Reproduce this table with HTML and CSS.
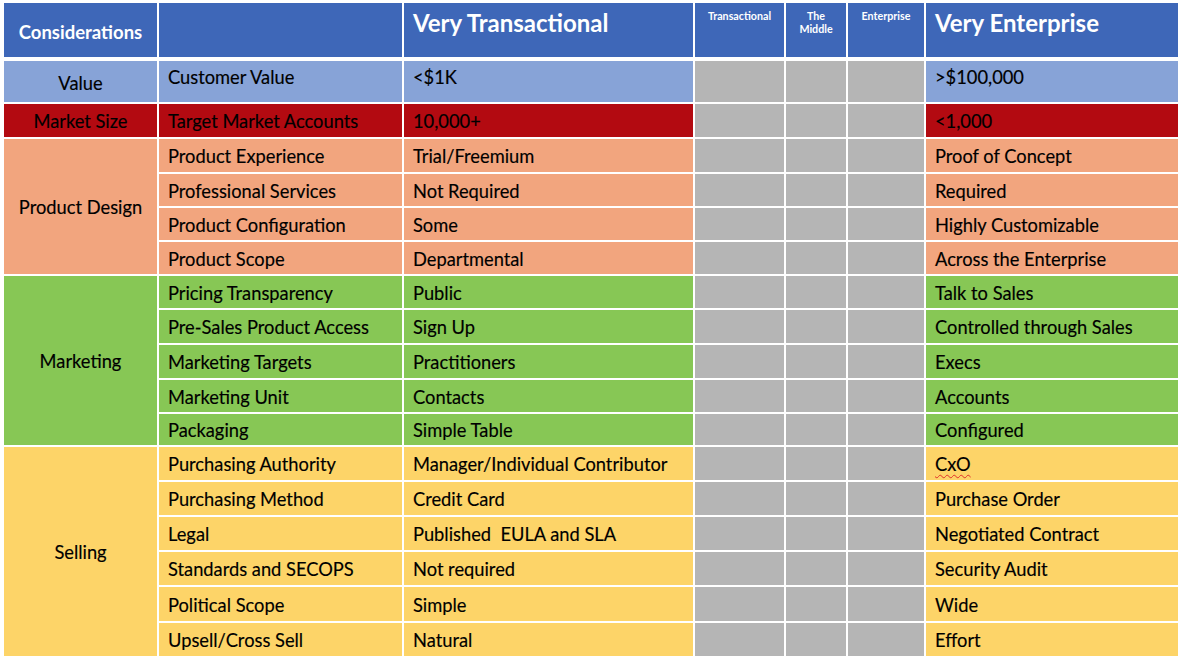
FILE: index.html
```html
<!DOCTYPE html>
<html lang="en">
<head>
<meta charset="utf-8">
<title>Transactional vs Enterprise</title>
<link rel="stylesheet" href="styles.css">
</head>
<body>
<div class="matrix">
  <div class="row head">
    <div class="cell cat">Considerations</div>
    <div class="cell"></div>
    <div class="cell big">Very Transactional</div>
    <div class="cell small">Transactional</div>
    <div class="cell small">The<br>Middle</div>
    <div class="cell small">Enterprise</div>
    <div class="cell big">Very Enterprise</div>
  </div>

  <div class="row value">
    <div class="cell cat">Value</div>
    <div class="cell">Customer Value</div>
    <div class="cell">&lt;$1K</div>
    <div class="cell gray"></div><div class="cell gray"></div><div class="cell gray"></div>
    <div class="cell">&gt;$100,000</div>
  </div>

  <div class="row market">
    <div class="cell cat">Market Size</div>
    <div class="cell">Target Market Accounts</div>
    <div class="cell">10,000+</div>
    <div class="cell gray"></div><div class="cell gray"></div><div class="cell gray"></div>
    <div class="cell">&lt;1,000</div>
  </div>

  <div class="row product">
    <div class="cell cat span4">Product Design</div>
    <div class="cell">Product Experience</div>
    <div class="cell">Trial/Freemium</div>
    <div class="cell gray"></div><div class="cell gray"></div><div class="cell gray"></div>
    <div class="cell">Proof of Concept</div>
  </div>
  <div class="row product">
    <div class="cell">Professional Services</div>
    <div class="cell">Not Required</div>
    <div class="cell gray"></div><div class="cell gray"></div><div class="cell gray"></div>
    <div class="cell">Required</div>
  </div>
  <div class="row product">
    <div class="cell">Product Configuration</div>
    <div class="cell">Some</div>
    <div class="cell gray"></div><div class="cell gray"></div><div class="cell gray"></div>
    <div class="cell">Highly Customizable</div>
  </div>
  <div class="row product">
    <div class="cell">Product Scope</div>
    <div class="cell">Departmental</div>
    <div class="cell gray"></div><div class="cell gray"></div><div class="cell gray"></div>
    <div class="cell">Across the Enterprise</div>
  </div>

  <div class="row marketing">
    <div class="cell cat span5">Marketing</div>
    <div class="cell">Pricing Transparency</div>
    <div class="cell">Public</div>
    <div class="cell gray"></div><div class="cell gray"></div><div class="cell gray"></div>
    <div class="cell">Talk to Sales</div>
  </div>
  <div class="row marketing">
    <div class="cell">Pre-Sales Product Access</div>
    <div class="cell">Sign Up</div>
    <div class="cell gray"></div><div class="cell gray"></div><div class="cell gray"></div>
    <div class="cell">Controlled through Sales</div>
  </div>
  <div class="row marketing">
    <div class="cell">Marketing Targets</div>
    <div class="cell">Practitioners</div>
    <div class="cell gray"></div><div class="cell gray"></div><div class="cell gray"></div>
    <div class="cell">Execs</div>
  </div>
  <div class="row marketing">
    <div class="cell">Marketing Unit</div>
    <div class="cell">Contacts</div>
    <div class="cell gray"></div><div class="cell gray"></div><div class="cell gray"></div>
    <div class="cell">Accounts</div>
  </div>
  <div class="row marketing">
    <div class="cell">Packaging</div>
    <div class="cell">Simple Table</div>
    <div class="cell gray"></div><div class="cell gray"></div><div class="cell gray"></div>
    <div class="cell">Configured</div>
  </div>

  <div class="row selling">
    <div class="cell cat span6">Selling</div>
    <div class="cell">Purchasing Authority</div>
    <div class="cell">Manager/Individual Contributor</div>
    <div class="cell gray"></div><div class="cell gray"></div><div class="cell gray"></div>
    <div class="cell"><span class="spell">CxO</span></div>
  </div>
  <div class="row selling">
    <div class="cell">Purchasing Method</div>
    <div class="cell">Credit Card</div>
    <div class="cell gray"></div><div class="cell gray"></div><div class="cell gray"></div>
    <div class="cell">Purchase Order</div>
  </div>
  <div class="row selling">
    <div class="cell">Legal</div>
    <div class="cell">Published&nbsp; EULA and SLA</div>
    <div class="cell gray"></div><div class="cell gray"></div><div class="cell gray"></div>
    <div class="cell">Negotiated Contract</div>
  </div>
  <div class="row selling">
    <div class="cell">Standards and SECOPS</div>
    <div class="cell">Not required</div>
    <div class="cell gray"></div><div class="cell gray"></div><div class="cell gray"></div>
    <div class="cell">Security Audit</div>
  </div>
  <div class="row selling">
    <div class="cell">Political Scope</div>
    <div class="cell">Simple</div>
    <div class="cell gray"></div><div class="cell gray"></div><div class="cell gray"></div>
    <div class="cell">Wide</div>
  </div>
  <div class="row selling">
    <div class="cell">Upsell/Cross Sell</div>
    <div class="cell">Natural</div>
    <div class="cell gray"></div><div class="cell gray"></div><div class="cell gray"></div>
    <div class="cell">Effort</div>
  </div>
</div>
</body>
</html>
```

FILE: styles.css
```css
* { box-sizing: border-box; }

html, body {
  margin: 0;
  padding: 0;
  background: #ffffff;
}

body {
  font-family: Lato, "Open Sans", sans-serif;
  color: #000000;
  width: 1185px;
  height: 663px;
  overflow: hidden;
}

.matrix {
  display: grid;
  margin: 3px 0 0 4px;
  width: 1174px;
  grid-template-columns: 153px 243px 289px 89px 60px 76px 252px;
  grid-template-rows: 56px 41px 33px 33px 32px 32px 32px 32px 33px 33px 32px 31px 33px 33px 33px 33px 34px 33px;
  gap: 2px;
}

.row { display: contents; }

.cell {
  display: flex;
  align-items: center;
  padding: 2px 9px 0;
  font-size: 18.3px;
  line-height: 21px;
  white-space: nowrap;
  -webkit-text-stroke: 0.15px #000;
}

.cell.cat { justify-content: center; padding: 2px 4px 0; }

.span4 { grid-row: span 4; }
.span5 { grid-row: span 5; }
.span6 { grid-row: span 6; }

/* header */
.head .cell {
  background: #3e67b8;
  color: #ffffff;
  font-weight: 700;
  margin-bottom: 2px;
  -webkit-text-stroke: 0;
}
.head .cat { font-size: 18.5px; padding-top: 4px; }
.head .big {
  align-items: flex-start;
  font-size: 24px;
  line-height: 28px;
  padding-top: 6px;
}
.head .small {
  flex-direction: column;
  align-items: center;
  justify-content: flex-start;
  text-align: center;
  font-size: 10.7px;
  line-height: 13px;
  padding: 6px 2px 0;
}

/* value */
.value .cell { background: #87a3d7; align-items: flex-start; padding-top: 6px; }
.value .cat { align-items: center; padding-top: 3px; }

.market .cell { background: #b30a11; }
.product .cell { background: #f2a57e; }
.marketing .cell { background: #87c755; }
.selling .cell { background: #fdd468; }

.row .cell.gray { background: #b5b5b5; }

.spell {
  text-decoration: underline wavy #e0302a;
  text-decoration-thickness: 1px;
  text-underline-offset: 3px;
}
```
